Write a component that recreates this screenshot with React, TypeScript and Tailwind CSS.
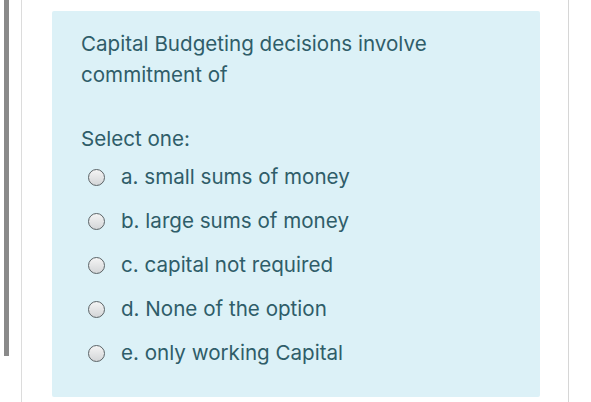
import React from 'react';

const options = [
  'a. small sums of money',
  'b. large sums of money',
  'c. capital not required',
  'd. None of the option',
  'e. only working Capital',
];

function Radio() {
  return (
    <span className="w-[17px] h-[17px] rounded-full border-[1.5px] border-[#5b6366] bg-gradient-to-b from-[#f4f4f4] to-[#d4d6d8] shrink-0" />
  );
}

export default function App() {
  return (
    <div
      className="flex w-[591px] h-[402px] bg-white overflow-hidden"
      style={{ fontFamily: 'Inter, "Liberation Sans", Arial, sans-serif' }}
    >
      {/* left gutter */}
      <div className="w-[4px] shrink-0" />
      <div className="w-[5px] h-[356px] bg-[#8a8a8a] shrink-0" />
      <div className="w-[12px] shrink-0" />
      <div className="w-px h-full bg-[#dcdcdc] shrink-0" />

      {/* main column */}
      <div className="w-[546px] shrink-0 pl-[30px] pr-[28px] pt-[11px] pb-[5px]">
        <div className="h-full bg-[#dcf1f7] rounded-[2px] pl-[29px] pt-[17px] text-[#2f5d69]">
          <p className="text-[20.6px] leading-[31px]">
            Capital Budgeting decisions involve
            <br />
            commitment of
          </p>
          <p className="text-[20.6px] leading-[31px] mt-[33px]">Select one:</p>
          <div className="flex flex-col mt-[1px]">
            {options.map(o => (
              <label key={o} className="flex items-center h-[44px] pl-[7px] gap-[16px]">
                <Radio />
                <span className="text-[20.6px]">{o}</span>
              </label>
            ))}
          </div>
        </div>
      </div>

      <div className="w-px h-full bg-[#d6d6d6] shrink-0" />
    </div>
  );
}
